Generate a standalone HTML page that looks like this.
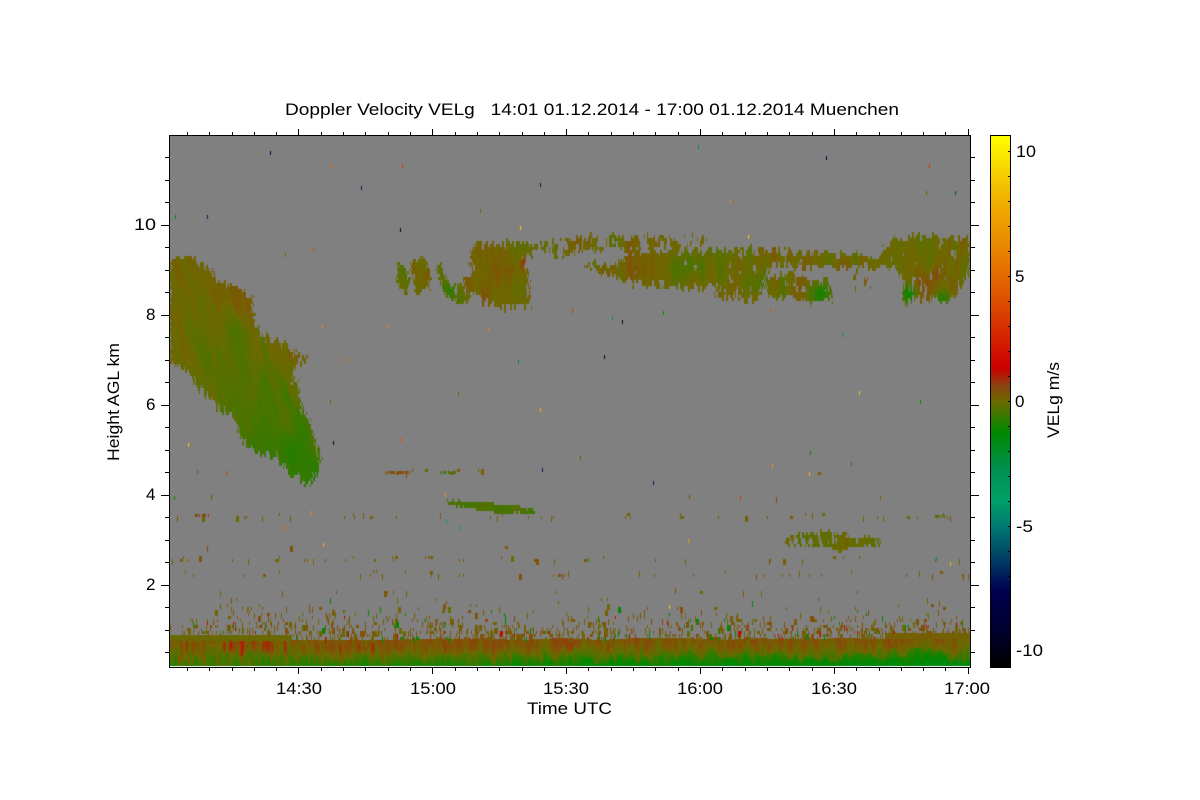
<!DOCTYPE html>
<html lang="en">
<head>
<meta charset="utf-8">
<title>Doppler Velocity VELg</title>
<style>
html,body{margin:0;padding:0;background:#fff;width:1200px;height:800px;overflow:hidden}
#s,#c{position:absolute;left:0;top:0;width:1200px;height:800px;display:block}
text{font-family:"Liberation Sans",Arial,sans-serif;fill:#000;white-space:pre}
.t{font-size:17px}
</style>
</head>
<body>
<svg id="s" width="1200" height="800" viewBox="0 0 1200 800" xmlns="http://www.w3.org/2000/svg">
<defs>
<linearGradient id="cb" x1="0" y1="135" x2="0" y2="667" gradientUnits="userSpaceOnUse">
<stop offset="0" stop-color="#ffff00"/>
<stop offset=".122" stop-color="#f0b000"/>
<stop offset=".218" stop-color="#e88400"/>
<stop offset=".31" stop-color="#de5000"/>
<stop offset=".385" stop-color="#d42000"/>
<stop offset=".438" stop-color="#cc0000"/>
<stop offset=".47" stop-color="#8c4010"/>
<stop offset=".5" stop-color="#6c6a00"/>
<stop offset=".558" stop-color="#008800"/>
<stop offset=".63" stop-color="#009050"/>
<stop offset=".686" stop-color="#00a068"/>
<stop offset=".735" stop-color="#007a70"/>
<stop offset=".799" stop-color="#003c64"/>
<stop offset=".855" stop-color="#000050"/>
<stop offset=".93" stop-color="#000030"/>
<stop offset="1" stop-color="#000000"/>
</linearGradient>
</defs>
<rect x="169" y="135" width="802" height="533" fill="#fff"/>
<rect x="170" y="136" width="800" height="530" fill="#808080"/>
<g id="polys" fill="#64700a">
<polygon points="169,258 178,256 196,260 200,265 212,272 212,279 224,280 228,287 240,287 244,293 250,297 252,305 253,315 256,325 262,332 268,339 278,338 282,343 292,347 296,355 307,357 307,361 298,362 293,368 293,378 297,386 298,398 300,405 305,415 309,424 312,436 317,445 321,457 320,468 313,478 309,489 302,480 296,475 285,470 280,462 277,455 268,454 252,451 247,446 240,436 238,424 232,418 222,410 210,400 200,391 192,380 182,368 172,361 169,361"/>
<polygon points="398,263 407,266 409,280 407,291 400,290 396,282"/>
<polygon points="411,262 420,258 427,263 430,275 428,288 420,295 414,290 411,276"/>
<polygon points="436,263 441,264 446,278 452,285 460,280 470,285 468,300 456,300 446,296 440,285"/>
<polygon points="473,245 500,243 530,245 530,255 523,260 528,275 528,300 530,307 500,307 480,300 465,285 463,275 472,272 470,260"/>
<polygon points="523,243 560,240 600,236 650,236 705,236 706,243 660,247 620,249 585,250 565,257 545,254 530,256"/>
<polygon points="583,262 600,263 612,268 620,262 628,252 680,248 713,250 745,247 815,254 850,255 893,258 895,266 860,268 830,268 812,268 770,264 765,274 760,298 745,300 730,295 717,298 716,285 700,286 680,287 650,285 635,284 612,278 600,272"/>
<polygon points="763,275 800,274 810,283 828,280 832,300 815,303 800,299 790,298 770,298"/>
<polygon points="893,240 915,236 970,238 970,272 960,285 950,302 930,300 915,297 905,305 900,290 905,280 895,270 880,260 885,245"/>
<polygon points="845,270 870,272 872,285 850,290"/>
<polygon points="445,500 490,502 515,505 535,510 535,513 495,513 470,508 450,504"/>
<polygon points="785,538 800,533 845,531 848,537 878,537 880,545 850,546 840,550 820,546 785,544"/>
<polygon points="170,635 290,635 300,639 880,638 893,633 970,633 970,666 170,666"/>
</g>
<g id="ax" shape-rendering="crispEdges">
<rect x="169" y="135" width="802" height="1"/>
<rect x="169" y="667" width="802" height="1"/>
<rect x="169" y="135" width="1" height="533"/>
<rect x="970" y="135" width="1" height="533"/>
</g>
<rect x="990" y="135" width="21" height="533" fill="url(#cb)" shape-rendering="crispEdges"/>
<g id="cbx" shape-rendering="crispEdges">
<rect x="990" y="135" width="21" height="1"/>
<rect x="990" y="135" width="1" height="533"/>
<rect x="1010" y="135" width="1" height="533"/>
<rect x="990" y="667" width="21" height="1"/>
</g>
<text class="t" x="285" y="115" textLength="614" lengthAdjust="spacingAndGlyphs" xml:space="preserve">Doppler Velocity VELg   14:01 01.12.2014 - 17:00 01.12.2014 Muenchen</text>
<text class="t" x="134" y="230" textLength="22" lengthAdjust="spacingAndGlyphs">10</text>
<text class="t" x="146" y="320">8</text>
<text class="t" x="146" y="410">6</text>
<text class="t" x="146" y="500">4</text>
<text class="t" x="146" y="590">2</text>
<text class="t" x="276" y="694" textLength="46" lengthAdjust="spacingAndGlyphs">14:30</text>
<text class="t" x="410" y="694" textLength="46" lengthAdjust="spacingAndGlyphs">15:00</text>
<text class="t" x="543" y="694" textLength="46" lengthAdjust="spacingAndGlyphs">15:30</text>
<text class="t" x="677" y="694" textLength="46" lengthAdjust="spacingAndGlyphs">16:00</text>
<text class="t" x="811" y="694" textLength="46" lengthAdjust="spacingAndGlyphs">16:30</text>
<text class="t" x="944" y="694" textLength="46" lengthAdjust="spacingAndGlyphs">17:00</text>
<text class="t" x="527" y="714" textLength="85" lengthAdjust="spacingAndGlyphs">Time UTC</text>
<text class="t" transform="translate(119,461) rotate(-90)" textLength="118" lengthAdjust="spacingAndGlyphs">Height AGL km</text>
<text class="t" transform="translate(1059,438) rotate(-90)" textLength="76" lengthAdjust="spacingAndGlyphs">VELg m/s</text>
<text class="t" x="1016" y="157" textLength="20" lengthAdjust="spacingAndGlyphs">10</text>
<text class="t" x="1015" y="282">5</text>
<text class="t" x="1015" y="407">0</text>
<text class="t" x="1016" y="532" textLength="17" lengthAdjust="spacingAndGlyphs">-5</text>
<text class="t" x="1016" y="656" textLength="27" lengthAdjust="spacingAndGlyphs">-10</text>
</svg>
<canvas id="c" width="1200" height="800"></canvas>
<script>
(function(){
var NS="http://www.w3.org/2000/svg";
function tick(g,x,y,w,h){var r=document.createElementNS(NS,"rect");r.setAttribute("x",x);r.setAttribute("y",y);r.setAttribute("width",w);r.setAttribute("height",h);g.appendChild(r);}
var ax=document.getElementById("ax"),cbx=document.getElementById("cbx"),k,x,y,L;
for(k=0;k<=35;k++){x=Math.round(186.9+k*22.31);L=((k-5)%6===0)?6:3;tick(ax,x,135-L,1,L);tick(ax,x,668,1,L);}
for(k=0;k<=22;k++){y=Math.round(157+k*22.5);L=((k-3)%4===0)?8:4;tick(ax,169-L,y,L,1);tick(ax,971,y,L,1);}
for(k=-10;k<=10;k++){y=Math.round(401-k*25);tick(cbx,1008,y,2,1);}

var c=document.getElementById("c").getContext("2d");
var stops=[[135,255,255,0],[200,240,176,0],[251,232,132,0],[300,222,80,0],[340,212,32,0],[368,204,0,0],[385,140,68,10],[401,108,106,0],[432,0,136,0],[470,0,144,80],[500,0,160,104],[526,0,122,112],[560,0,60,100],[590,0,0,80],[630,0,0,48],[667,0,0,0]];
function col(v){
  var yy=401-25*v,i;
  if(yy<=135)yy=135; if(yy>=667)yy=667;
  for(i=0;i<stops.length-1;i++){
    if(yy<=stops[i+1][0]){
      var a=stops[i],b=stops[i+1],t=(yy-a[0])/(b[0]-a[0]);
      return "rgb("+Math.round(a[1]+(b[1]-a[1])*t)+","+Math.round(a[2]+(b[2]-a[2])*t)+","+Math.round(a[3]+(b[3]-a[3])*t)+")";
    }
  }
  return "#000";
}
function h(a,b){var s=Math.sin(a*127.1+b*311.7)*43758.5453;return s-Math.floor(s);}
function sm(t){return t*t*(3-2*t);}
function n(x,y){
  var xi=Math.floor(x),yi=Math.floor(y),fx=sm(x-xi),fy=sm(y-yi);
  var p=h(xi,yi),q=h(xi+1,yi),r=h(xi,yi+1),s=h(xi+1,yi+1);
  return (p+(q-p)*fx)*(1-fy)+(r+(s-r)*fx)*fy;
}
function streak(x,y,sk){
  var u=x-y*sk;
  return ((n(u/9,y/30)*.5+n(u/3,y/22)*.3+n(u/1,y/14)*.2)-.5)*2.4;
}
function inPoly(P,x,y){
  var inside=false,i,j=P.length-1;
  for(i=0;i<P.length;i++){
    var a=P[i],b=P[j];
    if((a[1]>y)!==(b[1]>y)&&x<(b[0]-a[0])*(y-a[1])/(b[1]-a[1])+a[0])inside=!inside;
    j=i;
  }
  return inside;
}
var el=document.getElementById("polys").querySelectorAll("polygon"),polys=[],i;
for(i=0;i<el.length;i++){
  polys.push(el[i].getAttribute("points").trim().split(/\s+/).map(function(p){return p.split(",").map(Number);}));
}
function gauss(x,y,cx,cy,r){var d=((x-cx)*(x-cx)+(y-cy)*(y-cy))/(r*r);return Math.exp(-d);}
var spots=[[822,292,11,-1.0],[908,292,9,-1.0],[942,298,8,-.9],[533,270,5,-1.3],[760,283,10,-.3],[525,262,5,.7],[925,280,10,.4],[936,272,7,.3],[856,282,9,.25],[425,272,6,.25],[510,270,8,.2],[690,265,14,-.4],[640,268,12,.25],[450,288,7,-.5]];
function bias(x,y){var s=0;for(var q=0;q<spots.length;q++){s+=spots[q][3]*gauss(x,y,spots[q][0],spots[q][1],spots[q][2]);}return s;}
var regs=[
 {p:0,f:function(x,y){
    var d=Math.abs((x-185)*180-(y-290)*115)/213.6,e=d/55,s=((x-185)*115+(y-290)*180)/(213.6*213.6);
    s=Math.max(0,Math.min(1.2,s));
    return .02-.72*s+.42*e*e+streak(x,y,.22)*.33;
  },den:1,j:6},
 {p:1,f:function(x,y){return -.05+streak(x,y,0)*.35;},den:.85,j:4},
 {p:2,f:function(x,y){return .1+bias(x,y)+streak(x,y,0)*.38;},den:.85,j:5},
 {p:3,f:function(x,y){return -.15+bias(x,y)+streak(x,y,0)*.38;},den:.85,j:4},
 {p:4,f:function(x,y){return .14+bias(x,y)+streak(x,y,0)*.4;},den:1,j:6},
 {p:5,f:function(x,y){return .03+streak(x,y,0)*.35;},den:.6,j:5},
 {p:6,f:function(x,y){return .0+bias(x,y)+streak(x,y,0)*.42;},den:.9,j:6},
 {p:7,f:function(x,y){return .03+bias(x,y)+streak(x,y,0)*.42;},den:.8,j:5},
 {p:8,f:function(x,y){return .05+bias(x,y)+streak(x,y,0)*.42;},den:.9,j:6},
 {p:9,f:function(x,y){return .1+bias(x,y)+streak(x,y,0)*.4;},den:.35,j:5},
 {p:10,f:function(x,y){return -.4+streak(x,y,0)*.2;},den:1,j:2},
 {p:11,f:function(x,y){return -.08+streak(x,y,0)*.3;},den:.8,j:3}
];
var X,Y;
for(var ri=0;ri<regs.length;ri++){
  var R=regs[ri],P=polys[R.p],minx=1e9,maxx=-1e9,miny=1e9,maxy=-1e9;
  P.forEach(function(q){minx=Math.min(minx,q[0]);maxx=Math.max(maxx,q[0]);miny=Math.min(miny,q[1]);maxy=Math.max(maxy,q[1]);});
  minx=Math.max(170,minx-8);maxx=Math.min(969,maxx+8);miny-=8;maxy+=8;
  for(X=minx;X<=maxx;X++){
    var cj=(h(Math.floor(X/2),ri+3)-.5)*R.j*1.6;
    for(Y=136+3*Math.floor((miny-136)/3);Y<=maxy;Y+=3){
      var rj=(h(Math.floor(Y/3),X*.13+ri)-.5)*R.j;
      if(!inPoly(P,X+rj,Y+1+cj))continue;
      if(R.den<1){
        var dn=n(X/5,Y/9)*.55+n(X/1.5,Y/6)*.45;
        if(dn>R.den*.72+.12)continue;
      }
      c.fillStyle=col(R.f(X,Y));
      c.fillRect(X,Y,1,3);
    }
  }
}
/* lowest layer */
function topY(x){
  if(x<292)return 635;
  if(x<885)return 638+Math.round(n(x/40,1)*2);
  return 633;
}
for(X=170;X<970;X++){
  var ty=topY(X);
  var g=n(X/5,3.3)*.6+n(X/14,8.1)*.4;
  for(Y=ty;Y<666;Y+=3){
    var t=(Y-ty)/(666-ty);
    var lw=Math.max(.1,Math.min(1,(480-X)/240));
    var patch=Math.max(0,n(X/1.8,Y/15)-.6)*2.6*lw*(t>.15?1:0);
    var red2=.45*gauss(X,Y,568,643,10)*(.4+n(X/1.5,Y/12))+.15*gauss(X,Y,490,652,22);
    var right=Math.max(0,(X-500)/470);
    var v=.36-(1.25+.2*right)*Math.pow(t,1.4)+lw*.4*t;
    if(t>1-g*.85)v-=.3+.35*right;
    v+=((n((X-Y*.05)/4,Y/18)*.5+n((X-Y*.05)/1.2,Y/12)*.5)-.5)*1.2;
    if(Y-ty<5&&X<292)v=-.02+(h(X,Y)-.5)*.25;
    if(Y-ty<5&&X>=885)v=.15+(h(X,Y)-.5)*.3;
    if(v>.85)v=.85;
    v+=patch+red2;
    c.fillStyle=col(v);
    c.fillRect(X,Y,1,Math.min(3,666-Y));
  }
}
/* speckle band above the lowest layer */
for(Y=598;Y<640;Y+=3){
  var q=(Y-598)/42;
  for(X=170;X<970;X++){
    if(Y>=topY(X)-1)continue;
    var cl=n(X/7,Y/10);
    var pr=(.008+.28*q*q)*(.35+1.5*cl);
    if(Y>=605&&Y<=607)pr+=.012;
    if(h(X*1.37,Y*2.11)<pr){
      var r=h(X*3.1,Y*.7),vv;
      if(r<.03)vv=1.35;else if(r<.1)vv=-1.2;else vv=(h(X*.9,Y*1.9))*.62-.05;
      var w=h(X,Y*5.3)<.14?3:1;
      c.fillStyle=col(vv);
      c.fillRect(X,Y,w,h(X,Y)<.5?6:3);
    }
  }
}
/* faint strata rows */
var rows=[[516,.04,170,970],[559,.08,170,560],[559,.02,560,970],[574,.04,170,970],[591,.015,170,970],[472,.055,385,500],[472,.006,500,900],[497,.005,170,900],[546,.005,170,900]];
rows.forEach(function(rw){
  for(X=rw[2];X<rw[3];X++){
    var d=rw[1]*(.5+1.2*n(X/9,rw[0]));
    if(h(X*1.91,rw[0]*.77)<d){
      c.fillStyle=col(h(X*.5,rw[0])*.5-.03);
      var w=h(X*2.2,rw[0])<.2?3:1;
      c.fillRect(X,rw[0]+(h(X,3.3)<.3?-3:0),w,3+(h(X,9.1)<.35?3:0));
    }
  }
});
[[195,514,14,.6],[386,471,24,.4],[935,515,12,-.2],[370,570,8,.3],[440,471,16,-.45]].forEach(function(b){
  for(var xx=b[0];xx<b[0]+b[2];xx++){ if(h(xx,b[1])<.72){c.fillStyle=col(b[3]+(h(xx,7.7)-.5)*.4);c.fillRect(xx,b[1],1,3);} }
});
/* isolated specks */
var sp=[[270,151,-8],[331,164,5],[402,164,3],[175,215,-1.5],[207,215,-7],[698,145,-2.5],[826,156,-8],[929,164,3],[540,183,-7],[730,199,6],[926,191,.2],[955,191,-6],[361,186,-7],[400,228,-9],[520,226,9],[748,235,9],[313,248,4],[285,253,.2],[572,309,3],[622,320,-9],[604,355,-9],[322,325,6],[488,327,6],[540,408,8],[333,441,-9],[188,443,9],[347,358,5],[859,391,9],[842,333,-3],[518,360,-2],[612,316,-2.5],[458,392,.2],[387,324,6],[663,311,-1],[770,309,4],[810,451,-1],[772,464,7],[809,472,8],[542,468,-7],[653,481,-7],[445,493,7],[446,519,-4],[459,526,-4],[285,526,5],[310,511,7],[323,543,8],[588,558,-1],[669,605,9],[851,462,-1],[920,400,-1],[174,496,-1],[480,209,.1],[330,400,.3],[400,438,4],[226,471,3],[197,470,.3],[580,456,.3],[740,496,3],[688,539,7],[689,495,.5],[880,496,.4],[936,557,-3],[950,562,8]];
sp.forEach(function(a){c.fillStyle=col(a[2]);c.fillRect(a[0],a[1],1,4);});
document.getElementById("polys").style.display="none";
})();
</script>
</body>
</html>
